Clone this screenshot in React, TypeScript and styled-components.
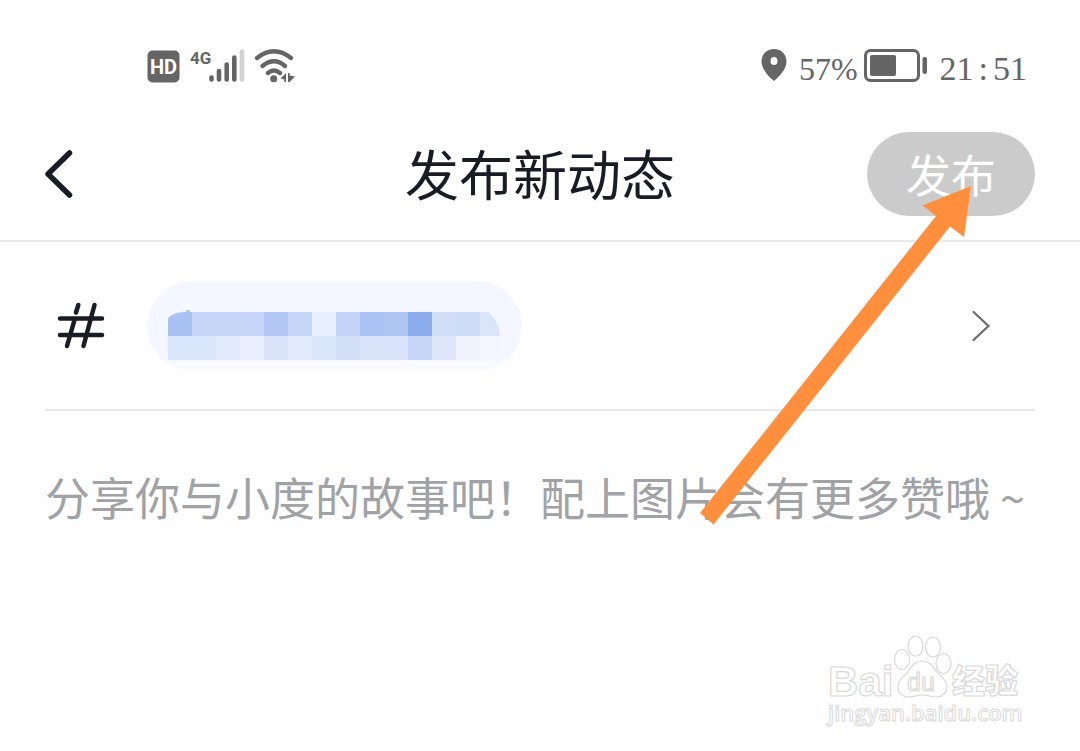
import React from "react";
import styled, { createGlobalStyle } from "styled-components";

const GlobalStyle = createGlobalStyle`
  * { box-sizing: border-box; }
  body {
    margin: 0;
    background: #fefefe;
    color: #191c24;
    font-family: "Noto Sans CJK SC", sans-serif;
  }
`;

const Screen = styled.div`
  position: relative;
  min-height: 100vh;
  display: flex;
  flex-direction: column;
  overflow: hidden;
`;

const StatusBar = styled.div`
  display: flex;
  justify-content: space-between;
  align-items: center;
  height: 108px;
  padding: 24px 53px 0 147px;
  color: #656565;
`;

const StatusGroup = styled.div<{ $gap: number }>`
  display: flex;
  align-items: center;
  gap: ${(p) => p.$gap}px;
`;

const StatusText = styled.span<{ $size: number }>`
  display: flex;
  font: ${(p) => p.$size}px/36px "Liberation Serif", serif;
  padding-top: 6px;
`;

const Colon = styled.span`
  padding: 0 5px;
`;

const NavBar = styled.header`
  display: grid;
  grid-template-columns: 1fr auto 1fr;
  align-items: center;
  height: 134px;
  padding: 0 45px;
  border-bottom: 2px solid #e9e9e9;
`;

const BackButton = styled.button`
  justify-self: start;
  display: flex;
  padding: 0;
  border: 0;
  background: none;
  color: inherit;
`;

const Title = styled.h1`
  margin: 0;
  padding-bottom: 2px;
  font-size: 54px;
  line-height: 72px;
  font-weight: 400;
`;

const PublishButton = styled.button`
  justify-self: end;
  width: 168px;
  height: 84px;
  padding: 0;
  border: 0;
  border-radius: 42px;
  background: #cbcbcb;
  color: #fff;
  font: 400 45px/60px "Noto Sans CJK SC", sans-serif;
`;

const TopicRow = styled.section`
  display: flex;
  align-items: center;
  height: 169px;
  margin: 0 45px;
  padding: 0 44px 0 12px;
  border-bottom: 2px solid #e9e9e9;
`;

const TopicPill = styled.button`
  display: flex;
  align-items: flex-start;
  width: 375px;
  height: 90px;
  margin: 0 auto 0 42px;
  padding: 29px 0 0 21px;
  border: 0;
  border-radius: 45px;
  background: linear-gradient(#f4f7ff 80px, #f9faff 80px);
`;

const MoreButton = styled.button`
  display: flex;
  padding: 0;
  border: 0;
  background: none;
  color: #6a6a6a;
`;

const Story = styled.textarea`
  flex: 1;
  margin: 0 45px;
  padding: 54px 0 0;
  border: 0;
  outline: 0;
  resize: none;
  overflow: hidden;
  background: none;
  font: 400 45px/64px "Noto Sans CJK SC", sans-serif;
  &::placeholder {
    color: #a0a2a6;
    opacity: 1;
  }
`;

const Pointer = styled.svg`
  position: absolute;
  top: 186px;
  right: 108px;
  pointer-events: none;
`;

const Watermark = styled.svg`
  position: absolute;
  top: 631px;
  right: 50px;
  pointer-events: none;
`;

const topRow = ["#a9c2f4", "#c5d5f8", "#c5d5f8", "#c7d6f8", "#b3c7f5", "#c5d5f8", "#e7eefd", "#c3d4f8", "#abc3f4", "#b0c6f3", "#8eadee", "#d2def7", "#cfdcf8", "#dae5fa"];
const bottomRow = ["#d9e5fb", "#d9e5fb", "#e3eafc", "#e8eefd", "#d9e4fa", "#e3eafc", "#d9e5fa", "#d3e0f8", "#d9e4fa", "#d9e3fa", "#c6d6f7", "#dfe8fb", "#f0f3fe", "#f3f6ff"];

function Mosaic() {
  return (
    <svg width="336" height="51" viewBox="0 0 336 51" aria-hidden="true">
      <clipPath id="tag">
        <path d="M0 8Q6 2 16 2H321Q331 12 332 26V50H0Z" />
      </clipPath>
      <g clipPath="url(#tag)" shapeRendering="crispEdges">
        {topRow.map((c, i) => <rect key={i} x={i * 24} y="2" width="24" height="24" fill={c} />)}
        {bottomRow.map((c, i) => <rect key={i} x={i * 24} y="26" width="24" height="24" fill={c} />)}
      </g>
      <path d="M18 0h4v2h-4Z" fill="#b9c9ec" />
    </svg>
  );
}

function SignalIcons() {
  return (
    <svg width="150" height="40" viewBox="147 46 150 40" role="img" aria-label="HD 4G Wi-Fi">
      <rect x="147.500" y="50.500" width="32" height="32" rx="5" fill="#656565" />
      <text x="163.500" y="74" textAnchor="middle" fontFamily="Roboto, sans-serif" fontWeight="700" fontSize="20" fill="#fff">HD</text>
      <text x="190" y="64" fontFamily="Roboto, sans-serif" fontWeight="700" fontSize="17" fill="#656565">4G</text>
      <g stroke="#656565" strokeWidth="4.6" strokeLinecap="round" fill="none">
        <path d="M211.500 77.500V79.500M219 71V79.500M226.700 64.500V79.500M234.300 57.500V79.500" />
        <path d="M242 51.500V79.500" stroke="#d2d2d2" />
        <path d="M257 58Q274 44.500 291 58M262.500 66Q274 56.500 285 66M268 73Q274 68 280 73" strokeWidth="4.300" />
      </g>
      <circle cx="273.700" cy="78.800" r="3.500" fill="#656565" />
      <path d="M286 73V82H284.300V79.500L280.500 78.500ZM288 73H289.700V75.500L295 76.500L289.700 82H288Z" fill="#656565" />
    </svg>
  );
}

export default function App() {
  return (
    <Screen>
      <GlobalStyle />
      <StatusBar>
        <SignalIcons />
        <StatusGroup $gap={12}>
          <StatusGroup $gap={6}>
            <StatusGroup $gap={10}>
              <svg width="28" height="36" viewBox="0 0 28 36" aria-hidden="true">
                <path fillRule="evenodd" d="M13 1C5.500 1 .5 6.500.5 13.500C.5 21 8 29 13 33C18 29 25.500 21 25.500 13.500C25.500 6.500 20.500 1 13 1ZM13 9A3.500 4 0 1 1 13 17A3.500 4 0 1 1 13 9Z" fill="#656565" />
              </svg>
              <StatusText $size={32}>57%</StatusText>
            </StatusGroup>
            <svg width="64" height="36" viewBox="0 0 64 36" aria-hidden="true">
              <rect x="1.500" y="2.500" width="53" height="30" rx="5" fill="none" stroke="#656565" strokeWidth="3" />
              <rect x="6" y="7" width="26" height="21" rx="2" fill="#656565" />
              <rect x="58.500" y="9" width="4.500" height="17" rx="2" fill="#656565" />
            </svg>
          </StatusGroup>
          <StatusText $size={34}>21<Colon>:</Colon>51</StatusText>
        </StatusGroup>
      </StatusBar>

      <NavBar>
        <BackButton aria-label="返回">
          <svg width="30" height="50" viewBox="0 0 30 50" fill="none" stroke="currentColor" strokeWidth="5.500" strokeLinecap="round" strokeLinejoin="round">
            <path d="M24.500 4L3 25L24.500 46" />
          </svg>
        </BackButton>
        <Title>发布新动态</Title>
        <PublishButton>发布</PublishButton>
      </NavBar>

      <TopicRow>
        <svg width="48" height="48" viewBox="57 301 48 48" fill="none" stroke="#191c24" strokeWidth="4.500" strokeLinecap="round" aria-hidden="true">
          <path d="M60 317.500H102M60 334H102M78.300 304L76 311.500M74.500 319L67 345M94.500 304L83.500 345" />
        </svg>
        <TopicPill aria-label="话题"><Mosaic /></TopicPill>
        <MoreButton aria-label="更多">
          <svg width="20" height="32" viewBox="0 0 20 32" fill="none" stroke="currentColor" strokeWidth="2.200" strokeLinecap="round">
            <path d="M2.500 2L17.500 16L2.500 30" />
          </svg>
        </MoreButton>
      </TopicRow>

      <Story aria-label="动态内容" placeholder="分享你与小度的故事吧！配上图片会有更多赞哦 ~" />

      <Pointer width="272" height="340" viewBox="700 186 272 340" aria-hidden="true">
        <path d="M971 186L922.500 205.500L936 216L700 513L713.500 524.500L950 226.500L964 237Z" fill="#ff8f3c" />
      </Pointer>

      <Watermark width="204" height="100" viewBox="826 631 204 100" role="img" aria-label="Baidu 经验">
        <g fill="#fff" stroke="#d9d9d9" strokeWidth="1.200">
          <text x="828" y="696" fontFamily="Liberation Sans, sans-serif" fontWeight="700" fontSize="42">Bai</text>
          <ellipse cx="902" cy="659.500" rx="7.500" ry="10" />
          <ellipse cx="915.500" cy="646" rx="7.500" ry="10" />
          <ellipse cx="933" cy="647" rx="7.500" ry="10" />
          <ellipse cx="943.500" cy="663.500" rx="7.500" ry="10" />
          <path d="M922 661C914 661 911 668 907 673C902 678 898 681 898 687C898 694 903 697 909 697C914 697 918 695 922 695C927 695 931 697 936 697C942 697 947 693 947 687C947 681 942 677 937 672C933 667 930 661 922 661Z" />
          <text x="907" y="691" fontFamily="Liberation Sans, sans-serif" fontSize="25">du</text>
          <text x="952" y="693" fontFamily="Noto Sans CJK SC, sans-serif" fontWeight="900" fontSize="33">经验</text>
          <text x="828" y="721" fontFamily="Open Sans, sans-serif" fontWeight="600" fontSize="22" strokeWidth="1">jingyan.baidu.com</text>
        </g>
      </Watermark>
    </Screen>
  );
}
